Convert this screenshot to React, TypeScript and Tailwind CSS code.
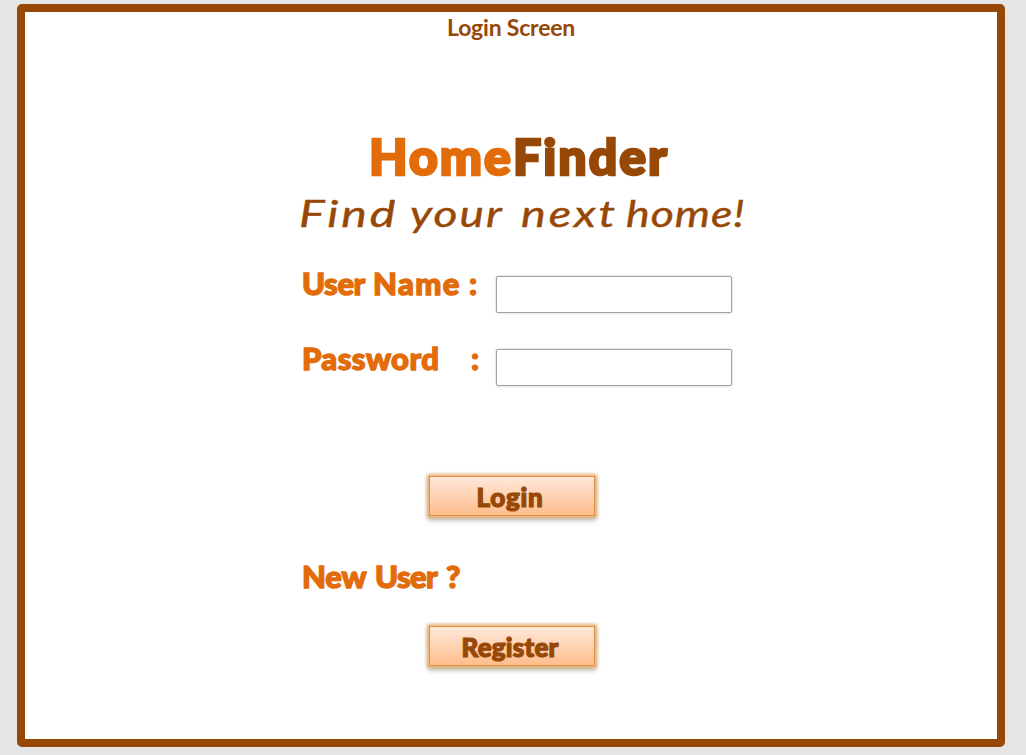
import type { ReactNode } from "react";

function Field({ id, type, top, children }: { id: string; type: string; top: string; children: ReactNode }) {
  return (
    <div className="flex items-start">
      <label
        htmlFor={id}
        className="flex w-[195px] shrink-0 text-[31px] leading-9 font-black whitespace-nowrap text-[#e36c0a] [-webkit-text-stroke:1.4px_#e36c0a]"
      >
        {children}
      </label>
      <input
        id={id}
        type={type}
        className={`${top} h-[37px] w-[236px] rounded-[2px] border border-[#a3a3a3] bg-white px-2 text-lg shadow-[0_0_2px_rgba(0,0,0,0.3)] outline-none`}
      />
    </div>
  );
}

function ActionButton({ text, children }: { text: string; children: ReactNode }) {
  return (
    <button className="flex h-[40px] w-[166px] items-center justify-center border border-[#e08f45] bg-linear-to-b from-[#ffe8da] to-[#ffbd8b] pt-px pr-1 text-[26px] leading-8 font-black text-[#974806] shadow-[0_0_3px_2px_#e9b577,0_3px_5px_1px_rgba(0,0,0,0.3)] [-webkit-text-stroke:1.2px_#974806]">
      <span className={text}>{children}</span>
    </button>
  );
}

export default function App() {
  return (
    <div className="h-[755px] w-[1026px] overflow-hidden bg-[#e5e5e5] pt-1 pl-[17px] font-['Lato',sans-serif]">
      <main className="flex h-[743px] w-[988px] flex-col rounded-[5px] border-8 border-[#974806] bg-white">
        <h2 className="mt-[3px] ml-[422px] text-[23px] leading-6 font-bold tracking-[-0.2px] whitespace-nowrap text-[#974806]">
          Login Screen
        </h2>
        <h1 className="mt-[89px] ml-[344px] flex text-[50px] leading-[56px] font-black whitespace-nowrap">
          <span className="w-[144px] tracking-[2px] text-[#e36c0a] [-webkit-text-stroke:2.6px_#e36c0a]">Home</span>
          <span className="tracking-[2px] text-[#974806] [-webkit-text-stroke:2.6px_#974806]">Finder</span>
        </h1>
        <p className="mt-[9px] ml-[274px] flex text-[36px] leading-10 font-normal whitespace-nowrap text-[#974806] italic [-webkit-text-stroke:0.4px_#974806]">
          <span className="w-[111px] origin-left scale-x-[1.34] tracking-[2.2px]">Find</span>
          <span className="w-[111px] origin-left scale-x-[1.28] tracking-[1.6px]">your</span>
          <span className="w-[105px] origin-left scale-x-[1.3] tracking-[2.2px]">next</span>
          <span className="origin-left scale-x-[1.24] tracking-[0.8px]">home!</span>
        </p>
        <form className="mt-8 ml-[276px] flex flex-col" onSubmit={(e) => e.preventDefault()}>
          <div className="flex flex-col gap-[27px]">
            <Field id="user" type="text" top="mt-[11px]">
              <span className="ml-px w-[71px] tracking-[-0.4px]">User</span>
              <span className="w-[96px] tracking-[1.4px]">Name</span>
              <span>:</span>
            </Field>
            <Field id="password" type="password" top="mt-[9px]">
              <span className="ml-px w-[169px] tracking-[0.4px]">Password</span>
              <span>:</span>
            </Field>
          </div>
          <div className="mt-[90px] ml-[128px]">
            <ActionButton text="tracking-[0.8px]">Login</ActionButton>
          </div>
          <p className="mt-[42px] ml-px flex text-[31px] leading-9 font-black whitespace-nowrap text-[#e36c0a] [-webkit-text-stroke:1.4px_#e36c0a]">
            <span className="w-[73px] tracking-[-0.2px]">New</span>
            <span className="w-[71px] tracking-[-0.6px]">User</span>
            <span>?</span>
          </p>
          <div className="mt-8 ml-[128px]">
            <ActionButton text="tracking-[0.2px]">Register</ActionButton>
          </div>
        </form>
      </main>
    </div>
  );
}
